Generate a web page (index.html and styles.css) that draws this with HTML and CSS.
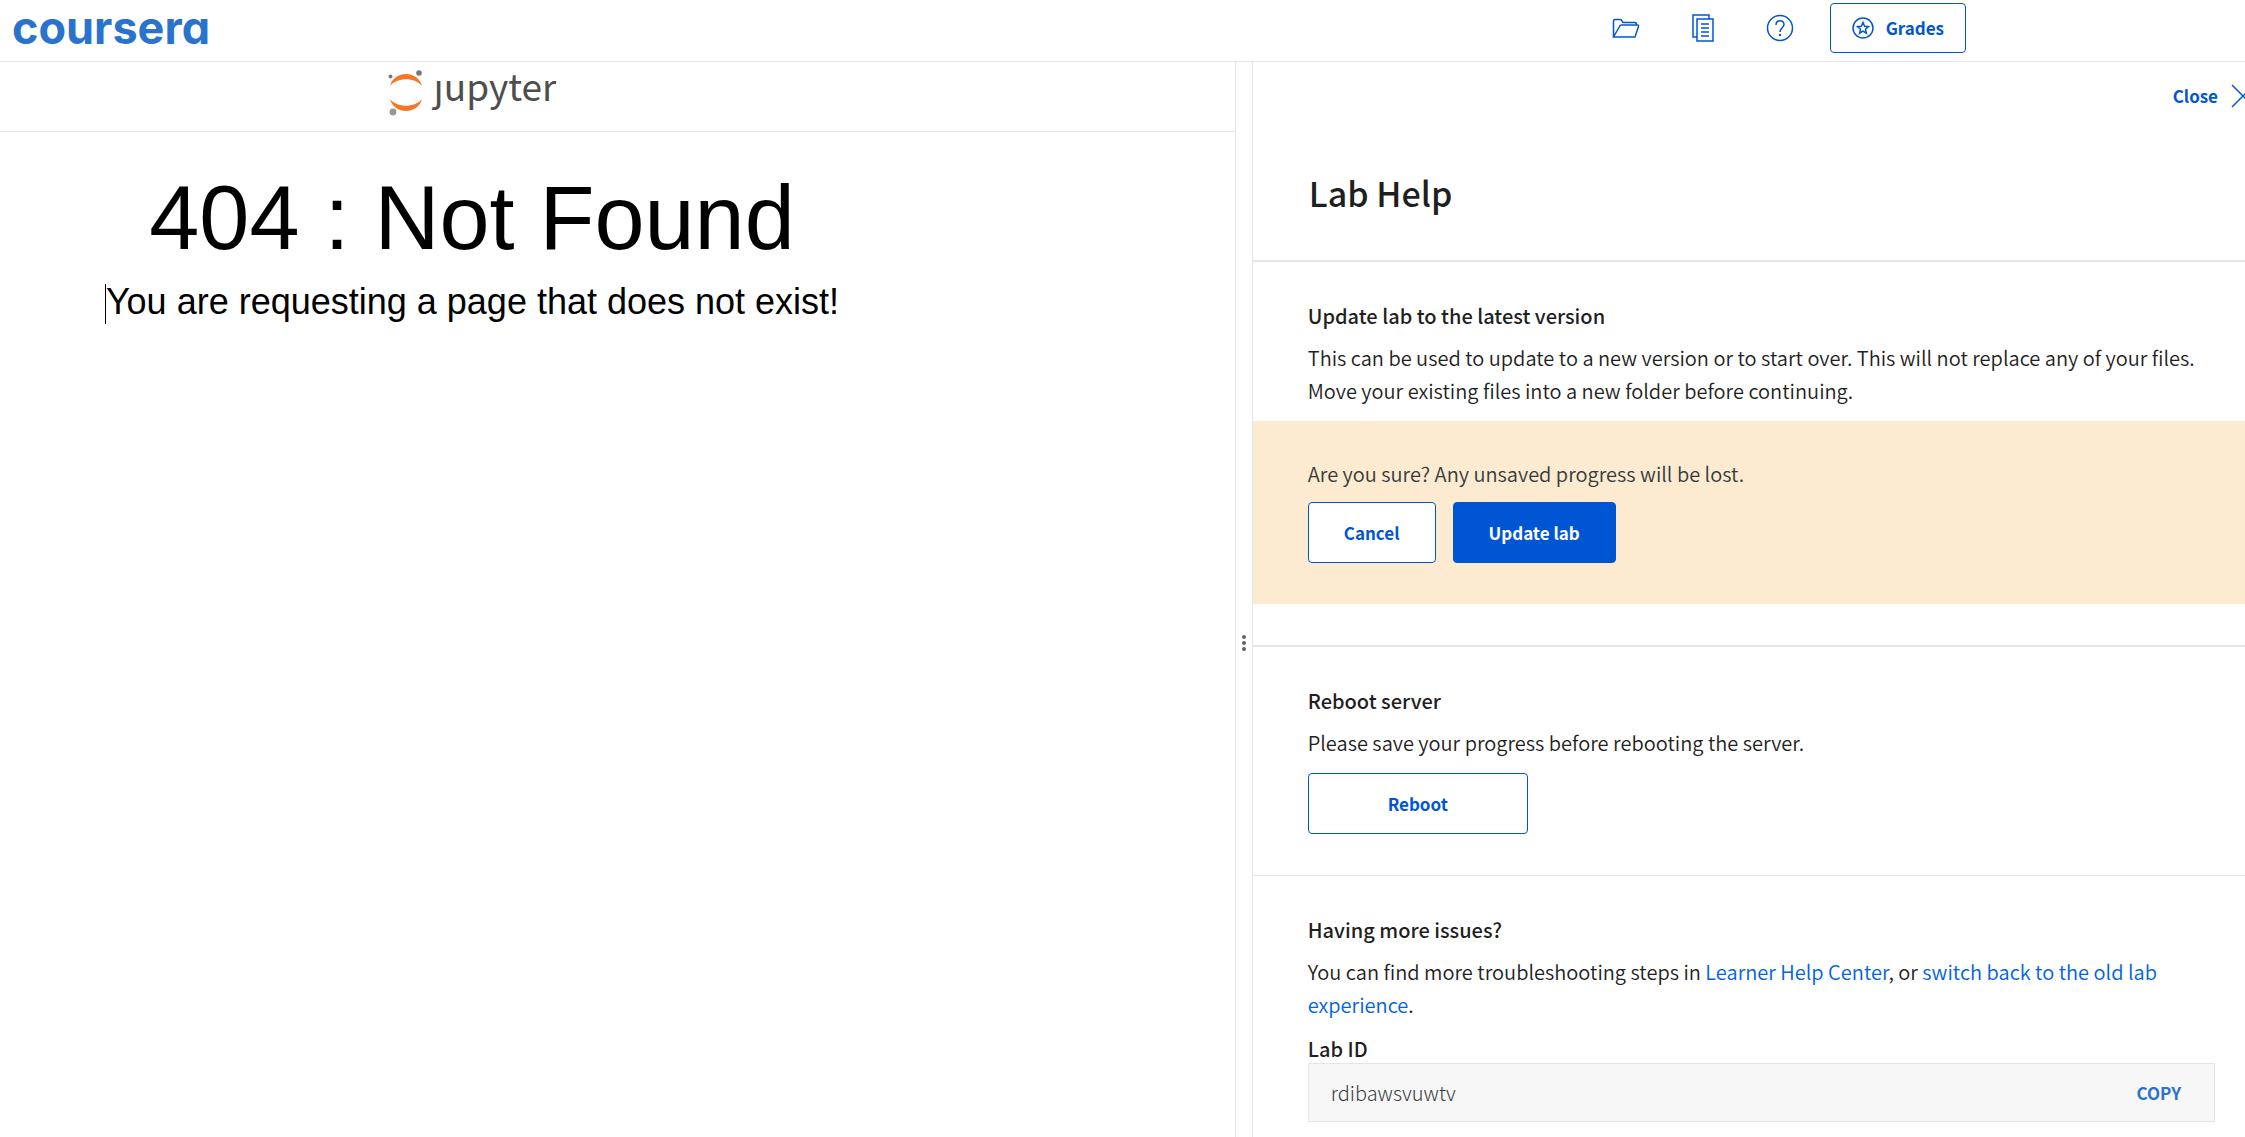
FILE: index.html
```html
<!DOCTYPE html>
<html lang="en">
<head>
<meta charset="utf-8">
<title>Lab Help | Coursera</title>
<link rel="stylesheet" href="styles.css">
</head>
<body>
<header class="topbar">
  <a class="brand" href="#">coursera</a>
  <div class="tools">
    <nav class="tool-icons" aria-label="Lab tools">
      <button class="tool" type="button" aria-label="Files">
        <svg width="28" height="28" viewBox="0 0 28 28"><path d="M1.500 23V7.500Q1.500 5.500 3 5.500H8Q9.500 5.500 10 7L11 8.500H23Q24.500 8.500 24.500 11M1.500 23L7.500 12.500Q8 11 9.500 11H25.500Q27 11 26.500 12.500L23 23Z"/></svg>
      </button>
      <button class="tool" type="button" aria-label="Instructions">
        <svg width="28" height="28" viewBox="0 0 28 28"><path d="M8 23H4V1H20V5M8 5H24V27H8ZM12 10H20M12 14H20M12 18H20M12 22H20"/></svg>
      </button>
      <button class="tool" type="button" aria-label="Help">
        <svg width="28" height="28" viewBox="0 0 28 28"><circle cx="14" cy="14" r="12.500"/><path d="M10 11C10 5.500 18 5.500 18 10.500C18 13.500 14 14 14 18"/><circle class="solid" cx="14" cy="21" r="1.200"/></svg>
      </button>
    </nav>
    <button class="btn btn-grades" type="button">
      <svg width="22" height="22" viewBox="0 0 22 22"><circle cx="11" cy="11" r="10"/><path d="M11 5.500L12.600 9.300L16.500 9.600L13.500 12.200L14.400 16.200L11 14.100L7.600 16.200L8.500 12.200L5.500 9.600L9.400 9.300Z"/></svg>
      Grades
    </button>
  </div>
</header>
<main class="workspace">
  <section class="notebook">
    <div class="notebook-bar">
      <a class="jupyter" href="#">
        <svg width="36" height="48" viewBox="0 0 36 48"><path class="orange" d="M2 17C6 1 30 1 34 17C27 8 9 8 2 17ZM2 30C6 46 30 46 34 30C27 39 9 39 2 30Z"/><circle class="grey" cx="2.500" cy="7.500" r="2"/><circle class="grey" cx="31" cy="4" r="2.800"/><circle class="grey-light" cx="5" cy="43" r="3.400"/></svg>
        <span class="jupyter-name">jupyter</span>
      </a>
    </div>
    <div class="not-found">
      <h1>404 : Not Found</h1>
      <p><span class="caret"></span>You are requesting a page that does not exist!</p>
    </div>
  </section>
  <div class="splitter" role="separator" aria-orientation="vertical"><i></i><i></i><i></i></div>
  <aside class="help">
    <div class="help-head">
      <button class="close" type="button">Close
        <svg width="26" height="26" viewBox="0 0 26 26"><path d="M2 2L24 24M24 2L2 24"/></svg>
      </button>
      <h2>Lab Help</h2>
    </div>
    <section class="block block-update">
      <h3>Update lab to the latest version</h3>
      <p>This can be used to update to a new version or to start over. This will not replace any of your files. Move your existing files into a new folder before continuing.</p>
      <div class="confirm">
        <p>Are you sure? Any unsaved progress will be lost.</p>
        <div class="actions">
          <button class="btn" type="button">Cancel</button>
          <button class="btn btn-primary" type="button">Update lab</button>
        </div>
      </div>
    </section>
    <section class="block">
      <h3>Reboot server</h3>
      <p>Please save your progress before rebooting the server.</p>
      <button class="btn btn-wide" type="button">Reboot</button>
    </section>
    <section class="block">
      <h3>Having more issues?</h3>
      <p>You can find more troubleshooting steps in <a href="#">Learner Help Center</a>, or <a href="#">switch back to the old lab experience</a>.</p>
      <label class="id-label" for="lab-id">Lab ID</label>
      <div class="id-box">
        <input id="lab-id" type="text" value="rdibawsvuwtv" readonly>
        <button class="copy" type="button">COPY</button>
      </div>
    </section>
  </aside>
</main>
</body>
</html>
```
FILE: styles.css
```css
* { box-sizing: border-box; }

body {
  margin: 0;
  height: 100vh;
  display: flex;
  flex-direction: column;
  overflow: hidden;
  background: #fff;
  color: #1f1f1f;
  font: 350 20px/33px "Noto Sans CJK JP", "Noto Sans", sans-serif;
}

h1, h2, h3, p { margin: 0; }
a { color: #0062e4; text-decoration: none; }
button, input { font: inherit; }
button { cursor: pointer; }

svg { display: block; flex: none; fill: none; stroke: #0056d2; stroke-width: 1.5; }
.solid { fill: #0056d2; stroke: none; }

.topbar {
  flex: none;
  display: flex;
  align-items: center;
  justify-content: space-between;
  height: 62px;
  padding: 0 279px 6px 12px;
  border-bottom: 1px solid #e5e5e5;
}
.brand {
  color: #2a73cc;
  font: 700 45px/48px Inter, sans-serif;
  font-feature-settings: "cv11";
}
.tools { display: flex; align-items: center; gap: 36px; }
.tool-icons { display: flex; gap: 49px; }
.tool { padding: 0; border: 0; background: none; }

.btn {
  height: 61px;
  padding: 0 35px;
  border: 1px solid #0056d2;
  border-radius: 4px;
  background: #fff;
  color: #0056d2;
  font-size: 17px;
  font-weight: 700;
  line-height: 24px;
}
.btn-primary { background: #0056d2; color: #fff; }
.btn-wide { width: 220px; }
.btn-grades {
  display: flex;
  align-items: center;
  gap: 12px;
  height: 50px;
  padding: 0 21px;
}

.workspace { flex: 1; display: flex; min-height: 0; }

.notebook { flex: 0 0 55%; }
.notebook-bar {
  height: 70px;
  border-bottom: 1px solid #e5e5e5;
}
.jupyter {
  display: flex;
  align-items: flex-start;
  justify-content: center;
  gap: 10px;
  max-width: 944px;
  padding-top: 7px;
  color: #4e4e4e;
  font-size: 37px;
  font-weight: 400;
}
.jupyter svg { stroke: none; }
/* The wordmark's j has no dot: the notch in the top-left corner hides it. */
.jupyter-name {
  clip-path: polygon(-4px 10px, 11px 10px, 11px 0, 100% 0, 100% calc(100% + 14px), -4px calc(100% + 14px));
}
.orange { fill: #f37726; }
.grey { fill: #767677; }
.grey-light { fill: #989798; }

.not-found {
  max-width: 944px;
  padding-top: 36px;
  color: #000;
  font-family: "Liberation Sans", Arial, sans-serif;
  font-weight: 400;
  text-align: center;
}
.not-found h1 { font-size: 90px; font-weight: 400; line-height: 100px; }
.not-found p { padding-top: 14px; font-size: 36px; line-height: 40px; }
.caret {
  display: inline-block;
  width: 1px;
  height: 40px;
  background: #000;
  vertical-align: middle;
}

.splitter {
  flex: 0 0 18px;
  display: flex;
  flex-direction: column;
  align-items: center;
  justify-content: center;
  gap: 2px;
  padding-top: 87px;
  border: solid #e5e5e5;
  border-width: 0 1px;
}
.splitter i { width: 4px; height: 4px; border-radius: 50%; background: #636363; }

.help { flex: 1; min-width: 0; }
.help-head {
  height: 200px;
  padding: 17px 0 0 56px;
  border-bottom: 2px solid #e5e5e5;
}
.help-head h2 { padding-top: 57px; font-size: 34px; font-weight: 500; line-height: 48px; }
.close {
  display: flex;
  align-items: center;
  gap: 12px;
  margin: 0 -11px 0 auto;
  padding: 0;
  border: 0;
  background: none;
  color: #0056d2;
  font-size: 17px;
  font-weight: 700;
}

.block { padding: 37px 30px 41px 55px; border-bottom: 1px solid #e5e5e5; }
.block:last-child { border: 0; }
.block-update { border-bottom-width: 2px; }
.block h3 { padding-bottom: 9px; font-size: 20px; font-weight: 500; line-height: 33px; }
.block .btn-wide { margin-top: 14px; }

.confirm {
  margin: 14px -30px 0 -55px;
  padding: 36px 55px 41px;
  background: #fcebd0;
  color: #373a3c;
}
.actions { display: flex; gap: 17px; padding-top: 12px; }

.id-label { display: block; padding-top: 13px; font-weight: 500; line-height: 29px; }
.id-box {
  display: flex;
  align-items: center;
  height: 59px;
  padding: 0 33px 0 22px;
  border: 1px solid #e5e5e5;
  background: #f7f7f7;
}
.id-box input {
  flex: 1;
  min-width: 0;
  padding: 0;
  border: 0;
  background: none;
  color: #373a3c;
  font-weight: 300;
  outline: 0;
}
.copy {
  padding: 0;
  border: 0;
  background: none;
  color: #2a73cc;
  font-size: 17px;
  font-weight: 700;
}
```
